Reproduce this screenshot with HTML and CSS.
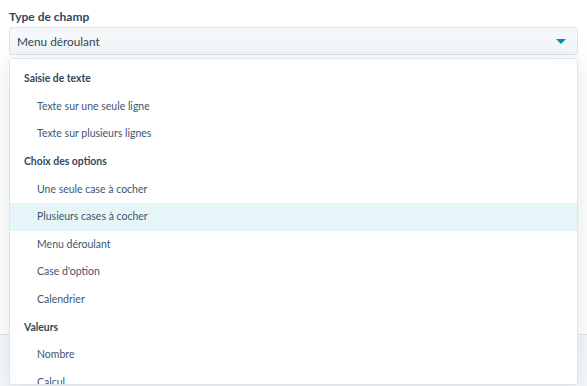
FILE: index.html
```html
<!DOCTYPE html>
<html>
  <head>
    <title>Type de champ</title>
    <link rel="stylesheet" href="styles.css">
  </head>
  <body>
    <div class="main-block">
      <div class="field">
        <label class="field-label">Type de champ</label>
        <div class="select">
          <span>Menu déroulant</span>
          <span class="caret"></span>
        </div>
        <div class="menu">
          <div class="group">Saisie de texte</div>
          <div class="option">Texte sur une seule ligne</div>
          <div class="option">Texte sur plusieurs lignes</div>
          <div class="group">Choix des options</div>
          <div class="option">Une seule case à cocher</div>
          <div class="option active">Plusieurs cases à cocher</div>
          <div class="option">Menu déroulant</div>
          <div class="option">Case d'option</div>
          <div class="option">Calendrier</div>
          <div class="group">Valeurs</div>
          <div class="option">Nombre</div>
          <div class="option">Calcul</div>
        </div>
      </div>
    </div>
    <div class="footer"></div>
  </body>
</html>
```

FILE: styles.css
```css
html, body {
margin: 0;
padding: 0;
height: 100%;
background: #fff;
font-family: Lato, "Open Sans", Arial, sans-serif;
color: #33475b;
overflow: hidden;
}
.main-block {
height: 334px;
padding: 9px 9px 0;
box-sizing: border-box;
}
.field {
position: relative;
}
.field-label {
display: block;
font-size: 12px;
font-weight: 700;
line-height: 16px;
margin-bottom: 2px;
}
.select {
display: flex;
justify-content: space-between;
align-items: center;
height: 28px;
box-sizing: border-box;
padding: 0 10px 0 7px;
background: #f5f8fa;
border: 1px solid #dfe3eb;
border-radius: 3px;
font-size: 11.8px;
}
.caret {
width: 0;
height: 0;
border-left: 5px solid transparent;
border-right: 5px solid transparent;
border-top: 5px solid #0091ae;
margin-right: 1px;
}
.menu {
position: absolute;
top: 49px;
left: 0;
right: 0;
height: 327px;
overflow: hidden;
padding-top: 6px;
box-sizing: border-box;
background: #fff;
border: 1px solid #dfe3eb;
border-radius: 3px;
box-shadow: 0 1px 24px rgba(45, 62, 80, 0.12);
z-index: 2;
}
.group, .option {
height: 27.64px;
line-height: 27.64px;
white-space: nowrap;
}
.group {
padding-left: 14px;
font-size: 10.4px;
font-weight: 700;
}
.option {
padding-left: 27px;
font-size: 10.5px;
color: #3e5670;
}
.option.active {
background: #e5f5f8;
}
.footer {
border-top: 1px solid #dfe3eb;
background: #f5f8fa;
height: 60px;
}
```
